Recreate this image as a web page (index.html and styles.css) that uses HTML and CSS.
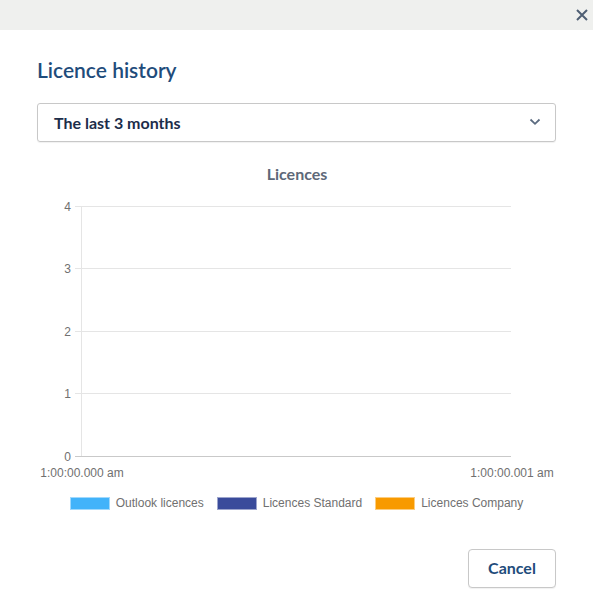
FILE: index.html
```html
<!DOCTYPE html>
<html lang="en">
<head>
<meta charset="utf-8">
<title>Licence history</title>
<link rel="stylesheet" href="styles.css">
</head>
<body>
<div class="dialog">
  <div class="topbar">
    <button class="close" aria-label="Close">
      <svg width="12" height="12" viewBox="0 0 12 12"><path d="M1 1L11 11M11 1L1 11" stroke="#4f5f74" stroke-width="2" fill="none"/></svg>
    </button>
  </div>
  <div class="body">
    <h1 class="title">Licence history</h1>
    <div class="select">
      <span class="select-text">The last 3 months</span>
      <svg class="chevron" width="12" height="8" viewBox="0 0 12 8"><path d="M1.5 1.5L6 5.8L10.5 1.5" stroke="#5b6b80" stroke-width="1.8" fill="none"/></svg>
    </div>
  </div>
  <div class="chart">
    <svg width="593" height="335" viewBox="0 0 593 335">
      <text class="chart-title" x="297" y="30" text-anchor="middle">Licences</text>
      <g stroke="#e5e5e5" stroke-width="1">
        <line x1="75" y1="56.5" x2="511" y2="56.5"/>
        <line x1="75" y1="118.5" x2="511" y2="118.5"/>
        <line x1="75" y1="181.5" x2="511" y2="181.5"/>
        <line x1="75" y1="243.5" x2="511" y2="243.5"/>
        <line x1="81.5" y1="56" x2="81.5" y2="306"/>
      </g>
      <line x1="75" y1="306.5" x2="511" y2="306.5" stroke="#c9c9c9" stroke-width="1"/>
      <g class="tick">
        <text x="71" y="60.5" text-anchor="end">4</text>
        <text x="71" y="122.5" text-anchor="end">3</text>
        <text x="71" y="185.5" text-anchor="end">2</text>
        <text x="71" y="247.5" text-anchor="end">1</text>
        <text x="71" y="310.5" text-anchor="end">0</text>
        <text x="82" y="327" text-anchor="middle">1:00:00.000 am</text>
        <text x="512" y="327" text-anchor="middle">1:00:00.001 am</text>
      </g>
    </svg>
  </div>
  <ul class="legend">
    <li class="legend-item"><span class="swatch swatch-outlook"></span>Outlook licences</li>
    <li class="legend-item"><span class="swatch swatch-standard"></span>Licences Standard</li>
    <li class="legend-item"><span class="swatch swatch-company"></span>Licences Company</li>
  </ul>
  <div class="footer">
    <button class="btn-cancel">Cancel</button>
  </div>
</div>
</body>
</html>
```
FILE: styles.css
```css
* { box-sizing: border-box; }
html, body { margin: 0; padding: 0; background: #fff; }
body { width: 593px; height: 615px; overflow: hidden; font-family: "Source Sans Pro", Lato, "Noto Sans", sans-serif; }
.dialog { width: 593px; }
.topbar {
  height: 30px;
  background: #eff0ee;
  display: flex;
  justify-content: flex-end;
  align-items: center;
  padding-right: 5px;
}
.close {
  border: 0; background: none; padding: 0;
  width: 12px; height: 12px;
  display: flex;
}
.body { padding: 0 37px; }
.title {
  margin: 28px 0 0;
  font-size: 21px;
  line-height: 24px;
  font-weight: 600;
  color: #1f4c7b;
}
.select {
  margin-top: 21px;
  height: 39px;
  border: 1px solid #c8c8c8;
  border-radius: 3px;
  display: flex;
  align-items: center;
  justify-content: space-between;
  padding: 0 14px 1px 16px;
  box-shadow: 0 1px 1px rgba(0,0,0,0.06);
}
.select-text {
  font-size: 16px;
  font-weight: 700;
  color: #1c2d4a;
}
.chart { height: 335px; margin-top: 8px; }
.chart svg { display: block; }
.chart-title {
  font-family: "Source Sans Pro", Lato, "Noto Sans", sans-serif;
  font-size: 16px;
  font-weight: 700;
  fill: #5d6878;
}
.tick text {
  font-family: "Liberation Sans", Arial, sans-serif;
  font-size: 12px;
  fill: #707070;
}
.legend {
  list-style: none;
  margin: 11px 0 0;
  padding: 0;
  display: flex;
  justify-content: center;
  gap: 13px;
  font-family: "Liberation Sans", Arial, sans-serif;
  font-size: 12px;
  color: #707070;
  line-height: 14px;
}
.legend-item { display: flex; align-items: center; }
.swatch {
  width: 40px; height: 13px;
  margin-right: 6px;
  border: 1px solid rgba(255,255,255,0.5);
}
.swatch-outlook { background: #42b3fa; }
.swatch-standard { background: #3a4b9b; }
.swatch-company { background: #f89a00; }
.footer {
  display: flex;
  justify-content: flex-end;
  padding: 39px 37px 0;
}
.btn-cancel {
  width: 88px;
  height: 39px;
  border: 1px solid #c8c8c8;
  border-radius: 4px;
  background: #fff;
  font-family: "Source Sans Pro", Lato, "Noto Sans", sans-serif;
  font-size: 16px;
  font-weight: 700;
  color: #1f4c7b;
  padding: 0 0 3px;
  box-shadow: 0 1px 1px rgba(0,0,0,0.06);
}
```
